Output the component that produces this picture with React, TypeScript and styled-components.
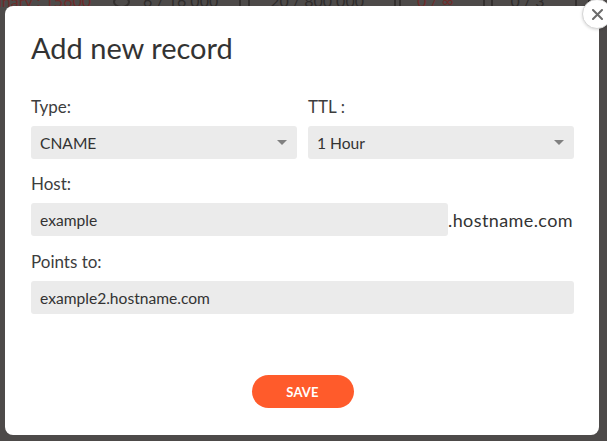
import styled, { createGlobalStyle } from 'styled-components';

// SECTION: Styles

const GlobalStyle = createGlobalStyle`
  html, body {
    margin: 0;
    padding: 0;
    background: #4d4a49;
    font-family: Lato, "Open Sans", sans-serif;
  }
`;

const PageBar = styled.div`
  display: flex;
  align-items: flex-end;
  height: 9px;
  overflow: hidden;
  font-size: 16px;
  line-height: 16px;
  white-space: nowrap;
`;

const BarItem = styled.span<{ $gap: number; $red?: boolean }>`
  margin-left: ${(p) => p.$gap}px;
  color: ${(p) => (p.$red ? '#6e2c2a' : '#2f2c2b')};
`;

const BarIcon = styled.span<{ $gap: number; $w: number; $round?: boolean }>`
  display: inline-block;
  margin-left: ${(p) => p.$gap}px;
  margin-bottom: 1px;
  width: ${(p) => p.$w}px;
  height: 12px;
  box-sizing: border-box;
  border: 2px solid #34302f;
  border-radius: ${(p) => (p.$round ? '50%' : '2px')};
`;

const Overlay = styled.div`
  position: fixed;
  inset: 0;
  display: flex;
  padding: 6px 8px 6px 5px;
`;

const Modal = styled.div`
  position: relative;
  flex: 1;
  display: flex;
  flex-direction: column;
  background: #fff;
  border-radius: 8px;
  padding: 25px 25px 27px 26px;
  color: #333;
`;

const Close = styled.button`
  position: absolute;
  top: -7px;
  right: -13px;
  width: 30px;
  height: 30px;
  padding: 0;
  border-radius: 50%;
  border: 1px solid #d6d6d6;
  background: #fff;
  display: flex;
  align-items: center;
  justify-content: center;
  box-shadow: 0 1px 3px rgba(0, 0, 0, 0.15);
`;

const Title = styled.h2`
  margin: 0 0 31px;
  font-size: 29px;
  line-height: 34px;
  font-weight: 400;
  color: #333;
`;

const Row = styled.div`
  display: grid;
  grid-template-columns: 1fr 1fr;
  column-gap: 11px;
  margin-bottom: 14px;
`;

const Field = styled.div<{ $mb?: number }>`
  display: flex;
  flex-direction: column;
  margin-bottom: ${(p) => p.$mb ?? 0}px;
`;

const Label = styled.label`
  font-size: 17px;
  line-height: 22px;
  margin-bottom: 8px;
  color: #3d3d3d;
`;

const Control = styled.div<{ $width?: number }>`
  position: relative;
  height: 33px;
  ${(p) => (p.$width ? `width: ${p.$width}px;` : '')}
  display: flex;
  align-items: center;
  padding: 0 10px 0 9px;
  box-sizing: border-box;
  background: #ebebeb;
  border-radius: 3px;
  font-size: 15.6px;
  color: #333;
`;

const Value = styled.span`
  flex: 1;
`;

const Caret = styled.span`
  width: 0;
  height: 0;
  border-left: 5px solid transparent;
  border-right: 5px solid transparent;
  border-top: 5px solid #808080;
`;

const HostLine = styled.div`
  display: flex;
  align-items: center;
`;

const Suffix = styled.span`
  font-size: 18px;
  letter-spacing: 0.4px;
  color: #333;
`;

const SaveButton = styled.button`
  margin-top: auto;
  align-self: center;
  width: 102px;
  height: 33px;
  border: none;
  border-radius: 17px;
  background: #ff5b2b;
  color: #fff;
  font-family: Lato, "Open Sans", sans-serif;
  font-weight: 700;
  font-size: 13px;
  letter-spacing: 0.2px;
`;
// !SECTION

// SECTION: Main

const Select = ({ value }: { value: string }) => (
  <Control>
    <Value>{value}</Value>
    <Caret />
  </Control>
);

const App = () => (
  <>
    <GlobalStyle />
    <PageBar>
      <BarItem $gap={-2} $red>
        inary : 15600
      </BarItem>
      <BarIcon $gap={22} $w={17} $round />
      <BarItem $gap={13}>6 / 16 000</BarItem>
      <BarIcon $gap={21} $w={11} />
      <BarItem $gap={20}>20 / 800 000</BarItem>
      <BarIcon $gap={30} $w={7} />
      <BarItem $gap={16} $red>
        0 / ∞
      </BarItem>
      <BarIcon $gap={30} $w={10} />
      <BarItem $gap={17}>0 / 3</BarItem>
      <BarIcon $gap={31} $w={15} />
    </PageBar>
    <Overlay>
      <Modal>
        <Close aria-label="close">
          <svg width="11" height="11" viewBox="0 0 11 11">
            <path d="M1 1 L10 10 M10 1 L1 10" stroke="#6b6b6b" strokeWidth="2" strokeLinecap="round" />
          </svg>
        </Close>
        <Title>Add new record</Title>
        <Row>
          <Field>
            <Label>Type:</Label>
            <Select value="CNAME" />
          </Field>
          <Field>
            <Label>TTL :</Label>
            <Select value="1 Hour" />
          </Field>
        </Row>
        <Field $mb={15}>
          <Label>Host:</Label>
          <HostLine>
            <Control $width={417}>example</Control>
            <Suffix>.hostname.com</Suffix>
          </HostLine>
        </Field>
        <Field>
          <Label>Points to:</Label>
          <Control>example2.hostname.com</Control>
        </Field>
        <SaveButton>SAVE</SaveButton>
      </Modal>
    </Overlay>
  </>
);

export default App;
